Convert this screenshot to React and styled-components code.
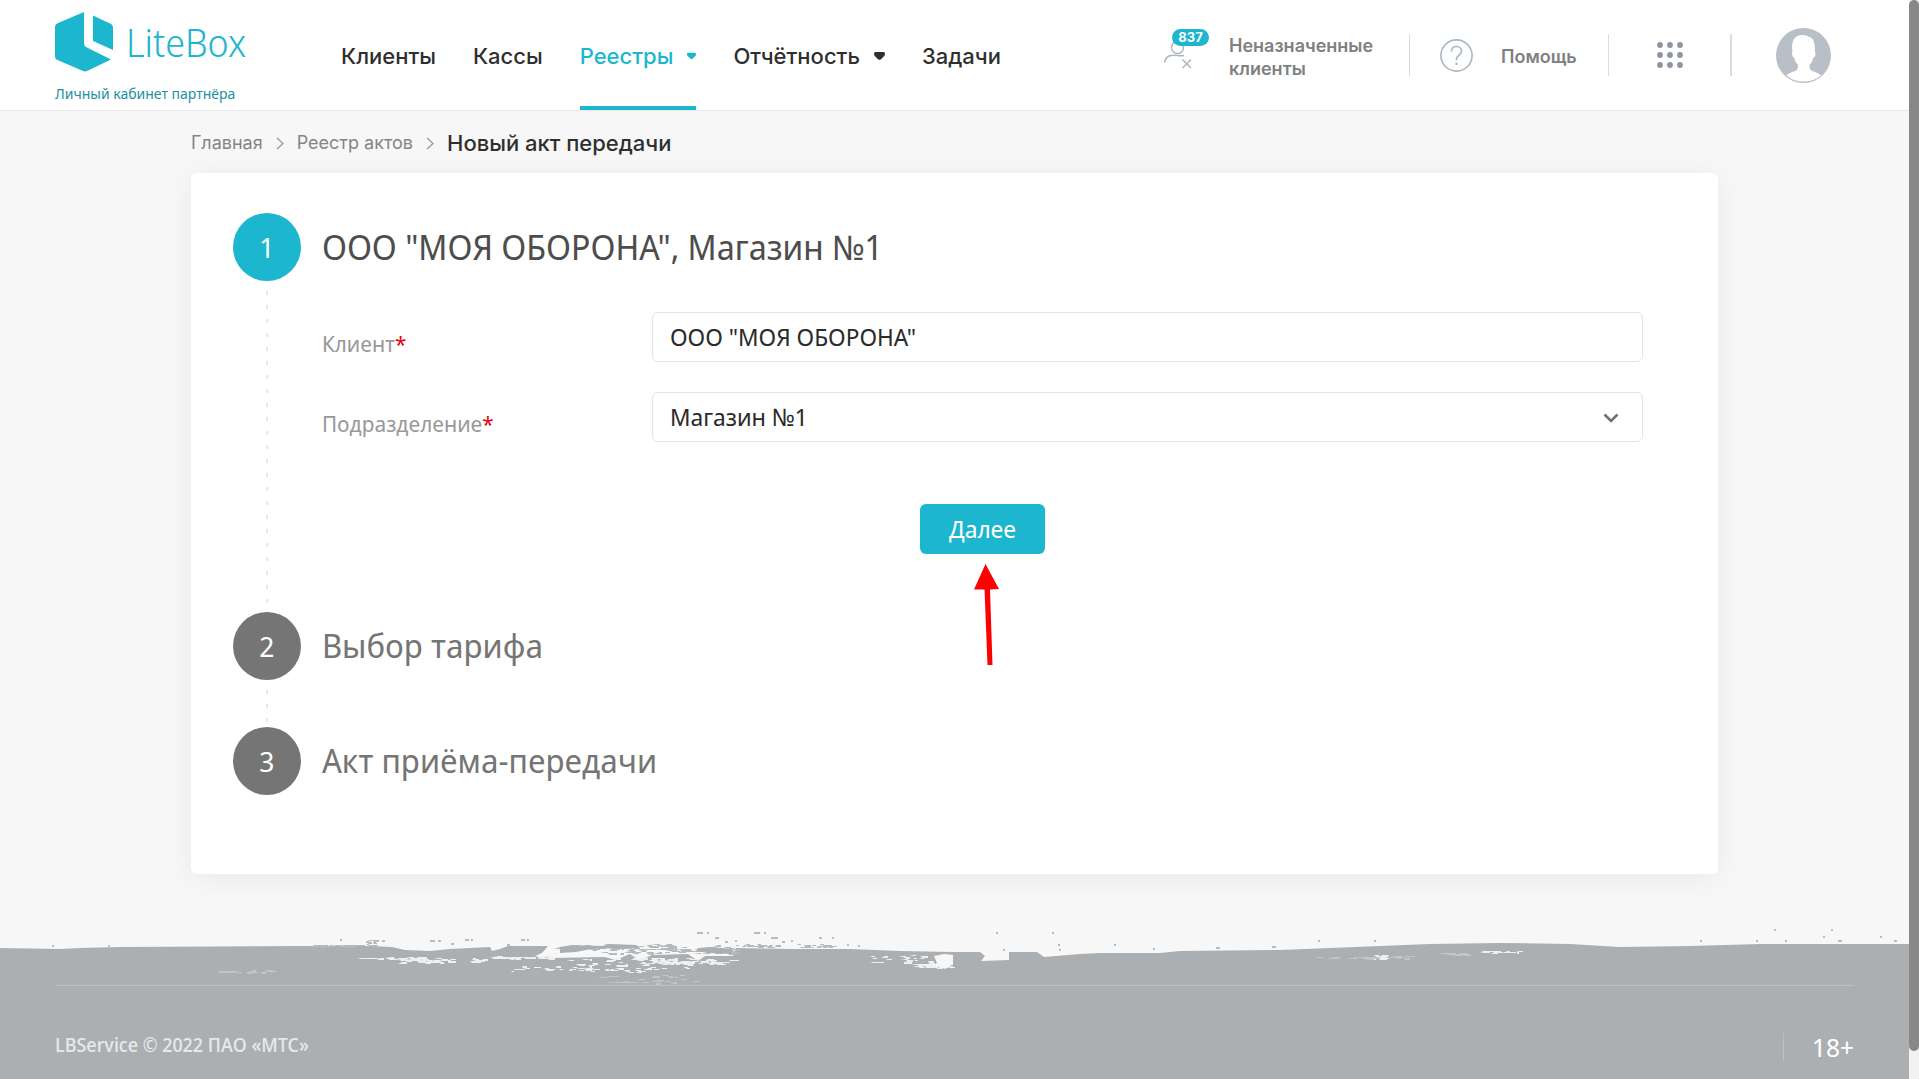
import React, { useState } from 'react';
import styled, { createGlobalStyle } from 'styled-components';

const GlobalStyle = createGlobalStyle`
  * {
    box-sizing: border-box;
  }

  body {
    margin: 0;
    background: #f7f7f7;
    color: #333;
    font-family: 'Noto Sans Display', 'Noto Sans', sans-serif;
  }

  a {
    color: inherit;
    text-decoration: none;
  }
`;

const Shell = styled.div`
  display: flex;
  min-height: 100vh;
`;

const Page = styled.div`
  flex: 1;
  min-width: 0;
  display: flex;
  flex-direction: column;
`;

const Scrollbar = styled.div`
  position: sticky;
  top: 0;
  width: 10px;
  height: 100vh;
  background: #f1f1f1;
`;

const Thumb = styled.div`
  height: calc(100% - 28px);
  border-radius: 5px;
  background: #888;
`;

const Header = styled.header`
  display: flex;
  justify-content: space-between;
  height: 111px;
  padding: 0 78px 0 55px;
  background: #fff;
  border-bottom: 1px solid #e8e8e8;
  font-family: Inter, sans-serif;
`;

const Side = styled.div`
  display: flex;
`;

const Brand = styled.a`
  display: flex;
  flex-direction: column;
  width: 286px;
  padding-top: 12px;
  color: #1b91a3;
  font: 14px/20px 'Noto Sans', sans-serif;
`;

const BrandTop = styled.span`
  display: flex;
  gap: 12px;
  height: 72px;
  color: #1cb6ce;
  font: 300 38px/60px 'Noto Sans Display', 'Noto Sans', sans-serif;
`;

const Nav = styled.nav`
  display: flex;
  gap: 37px;
`;

const NavLink = styled.a`
  display: flex;
  align-items: center;
  gap: 14px;
  height: 110px;
  padding-top: 6px;
  border-bottom: 4px solid ${({ $active }) => ($active ? '#1cb6ce' : 'transparent')};
  color: ${({ $active }) => ($active ? '#1cb6ce' : '#2f2f2f')};
  font-size: 22px;
  font-weight: 500;
`;

const Tools = styled.div`
  display: flex;
  align-items: center;
`;

const ToolLink = styled.a`
  display: flex;
  align-items: center;
  gap: ${({ $gap }) => $gap}px;
  color: #808080;
  font-size: 18px;
  font-weight: 600;
  line-height: 23px;
`;

const ToolText = styled.span`
  min-width: ${({ $min = 0 }) => $min}px;
  padding-top: 3px;
`;

const IconBox = styled.span`
  position: relative;
  display: flex;
  width: 45px;
`;

const Badge = styled.span`
  position: absolute;
  top: -9px;
  left: 8px;
  width: 37px;
  border-radius: 9px;
  background: #1cb6ce;
  color: #fff;
  font-size: 13px;
  font-weight: 700;
  line-height: 17px;
  text-align: center;
`;

const Divider = styled.span`
  width: ${({ $w = 1 }) => $w}px;
  height: 42px;
  margin: 0 ${({ $right }) => $right}px 0 ${({ $left }) => $left}px;
  background: #dcdcdc;
`;

const IconButton = styled.button`
  display: flex;
  padding: 0;
  border: none;
  background: none;
  cursor: pointer;
`;

const Main = styled.main`
  padding: 0 10%;
`;

const Crumbs = styled.nav`
  display: flex;
  align-items: center;
  gap: 13px;
  height: 62px;
  padding-top: 2px;
  color: #858585;
  font: 18px/24px Inter, sans-serif;
`;

const Current = styled.span`
  color: #2f2f2f;
  font-size: 22px;
  font-weight: 500;
`;

const Card = styled.section`
  padding: 40px 75px 79px 42px;
  border-radius: 6px;
  background: #fff;
  box-shadow: 0 4px 30px rgba(0, 0, 0, 0.06);
`;

const StepRow = styled.div`
  display: flex;
  gap: 21px;
`;

const Rail = styled.div`
  display: flex;
  flex-direction: column;
  align-items: center;
  gap: 10px;
`;

const Circle = styled.span`
  width: 68px;
  height: 68px;
  border-radius: 50%;
  background: ${({ $active }) => ($active ? '#1cb6ce' : '#757575')};
  color: #fff;
  font-size: 28px;
  line-height: 68px;
  text-align: center;
`;

const Dashes = styled.span`
  flex: 1;
  width: 2px;
  background: repeating-linear-gradient(#e8e8e8 0 4px, transparent 4px 14px);
`;

const StepBody = styled.div`
  flex: 1;
  padding-bottom: ${({ $bottom = 0 }) => $bottom}px;
`;

const StepTitle = styled.h2`
  margin: 0;
  color: ${({ $active }) => ($active ? '#4d4d4d' : '#757575')};
  font-size: ${({ $active }) => ($active ? 34 : 33)}px;
  font-weight: 400;
  line-height: 68px;
`;

const Form = styled.form`
  display: flex;
  flex-direction: column;
  gap: 30px;
  padding-top: 31px;
`;

const Field = styled.div`
  display: grid;
  grid-template-columns: 330px 1fr;
`;

const Label = styled.label`
  padding-top: 15px;
  color: #999;
  font-size: 22px;
  line-height: 32px;
`;

const Required = styled.span`
  color: #e30613;
`;

const Control = styled.input`
  width: 100%;
  height: 50px;
  padding: 0 17px 2px;
  border: 1px solid #e3e3e3;
  border-radius: 6px;
  background: #fff;
  color: #2b2b2b;
  font: 24px 'Noto Sans Display', 'Noto Sans', sans-serif;
  appearance: none;
`;

const SelectBox = styled.div`
  position: relative;

  svg {
    position: absolute;
    top: 21px;
    right: 24px;
    pointer-events: none;
  }
`;

const Submit = styled.div`
  position: relative;
  display: flex;
  justify-content: center;
  padding-top: 32px;
`;

const Button = styled.button`
  height: 50px;
  padding: 0 29px 2px;
  border: none;
  border-radius: 6px;
  background: #1cb6ce;
  color: #fff;
  font: 24px 'Noto Sans Display', 'Noto Sans', sans-serif;
  cursor: pointer;
`;

const Arrow = styled.svg`
  position: absolute;
  top: 92px;
  left: calc(50% - 9px);
`;

const Footer = styled.footer`
  margin-top: auto;
`;

const Brush = styled.svg`
  display: block;
  width: 100%;
  height: 67px;
`;

const FooterBody = styled.div`
  padding: 0 55px 17px;
  background: #abafb2;
`;

const FooterRow = styled.div`
  display: flex;
  justify-content: space-between;
  align-items: center;
  padding-top: 45px;
  border-top: 1px solid #bcc0c3;
  color: #e6e8e9;
  font-size: 19px;
  font-weight: 500;
  line-height: 28px;
`;

const Copyright = styled.span`
  padding-bottom: 3px;
`;

const Age = styled.span`
  padding-left: 28px;
  border-left: 1px solid #bcc0c3;
  color: #fff;
  font-size: 26px;
  font-weight: 400;
`;

// small repeatable generator, keeps the brush texture the same on every render
const scatter = (seed, count, x, y, w, h, maxW) => {
  let s = seed;
  const next = () => {
    s = (s * 16807) % 2147483647;
    return s / 2147483647;
  };
  return Array.from({ length: count }, () => {
    const px = Math.round(x + next() * w);
    const py = Math.round(y + next() * h);
    return `M${px} ${py}h${Math.round(2 + next() * maxW)}v${next() > 0.75 ? 2 : 1}h-${Math.round(2 + next() * maxW)}z`;
  }).join('');
};

const holes = [
  scatter(11, 20, 362, 39, 60, 2, 8),
  scatter(23, 38, 400, 40, 50, 4, 7),
  scatter(37, 14, 470, 40, 18, 4, 6),
  scatter(41, 26, 492, 38, 54, 2, 9),
  scatter(53, 30, 512, 48, 120, 5, 6),
  scatter(61, 60, 640, 40, 90, 6, 8),
  scatter(67, 50, 570, 40, 120, 14, 6),
  scatter(83, 18, 870, 37, 60, 8, 6),
  scatter(97, 46, 916, 45, 32, 4, 7),
  scatter(127, 14, 1480, 33, 40, 1, 8),
  scatter(113, 14, 1372, 37, 12, 4, 6),
].join('');

const faintHoles = [
  scatter(149, 22, 218, 52, 56, 3, 7),
  scatter(71, 24, 600, 56, 96, 9, 8),
  scatter(101, 20, 1318, 38, 90, 2, 9),
  scatter(131, 10, 1440, 35, 28, 1, 8),
].join('');

const specks = [
  scatter(151, 34, 312, 27, 60, 1, 8),
  scatter(163, 70, 560, 26, 176, 7, 8),
  scatter(173, 50, 600, 30, 134, 5, 8),
  scatter(181, 26, 742, 26, 38, 3, 3),
  scatter(191, 26, 798, 26, 38, 3, 3),
  scatter(193, 10, 366, 22, 12, 4, 2),
].join('');

const dots = [
  [52, 27, 2], [108, 27, 2], [340, 21, 2], [374, 22, 5], [382, 22, 3], [430, 22, 5], [438, 22, 3],
  [465, 21, 4], [471, 21, 2], [521, 21, 4], [527, 21, 2], [451, 25, 3], [507, 26, 3],
  [697, 14, 6], [707, 14, 2], [754, 14, 6], [764, 14, 2], [715, 19, 4], [725, 23, 3], [735, 22, 2],
  [771, 19, 7], [782, 23, 3], [791, 22, 2], [819, 19, 3], [832, 19, 2], [847, 26, 2], [858, 27, 2],
  [996, 14, 2], [1052, 14, 2], [1003, 31, 2], [1058, 26, 2], [1059, 31, 2], [1114, 26, 2],
  [1153, 30, 2], [1216, 29, 4], [1272, 28, 4], [1318, 22, 2], [1374, 22, 2], [1700, 22, 2],
  [1756, 22, 2], [1774, 11, 2], [1831, 11, 2], [1785, 22, 2], [1823, 18, 2], [1838, 22, 4], [1880, 18, 2], [1894, 22, 3],
];

const Caret = ({ width = 11 }) => (
  <svg width={width} height="8" viewBox="0 0 11 8" fill="currentColor">
    <path d="M1.500 0h8q1.500 0 1.500 1.500t-.8 2.500L7 7.200q-1.500 1.300-3 0L.8 4Q0 3 0 1.500T1.500 0z" />
  </svg>
);

const Chevron = () => (
  <svg width="8" height="13" viewBox="0 0 8 13" fill="none" stroke="#999" strokeWidth="1.300">
    <path d="M1 1l6 5.500L1 12" />
  </svg>
);

const App = () => {
  const [client, setClient] = useState('ООО "МОЯ ОБОРОНА"');
  const [unit, setUnit] = useState('Магазин №1');

  return (
    <Shell>
      <GlobalStyle />
      <Page>
        <Header>
          <Side>
            <Brand href="#">
              <BrandTop>
                <svg width="59" height="60" viewBox="0 0 59 60" fill="#1cb6ce">
                  <path d="M29 0v31q0 3 3 4.500L56 47.500 32.500 58.800q-2.500 1.200-5 0L2.500 48Q0 47 0 44.500V15q0-2.500 2.500-3.700z" />
                  <path d="M38 3.500l16.500 7.700q3.500 1.600 3.500 4.300V38L38 29z" />
                </svg>
                LiteBox
              </BrandTop>
              Личный кабинет партнёра
            </Brand>
            <Nav>
              <NavLink href="#">Клиенты</NavLink>
              <NavLink href="#">Кассы</NavLink>
              <NavLink href="#" $active>Реестры <Caret width={9} /></NavLink>
              <NavLink href="#">Отчётность <Caret /></NavLink>
              <NavLink href="#">Задачи</NavLink>
            </Nav>
          </Side>
          <Tools>
            <ToolLink href="#" $gap={20}>
              <IconBox>
                <svg width="28" height="34" viewBox="0 0 28 34" fill="none" stroke="#aab6c3" strokeWidth="1.500">
                  <circle cx="13.500" cy="9.500" r="6" />
                  <path d="M.8 24.500v-1.500Q2.500 18 7 17.500q3.500-.5 6.500 0t6.500 0" />
                  <path d="M18.500 21.500l8.500 8.500M27 21.500L18.500 30" />
                </svg>
                <Badge>837</Badge>
              </IconBox>
              <ToolText $min={150}>Неназначенные<br />клиенты</ToolText>
            </ToolLink>
            <Divider $left={30} $right={30} />
            <ToolLink href="#" $gap={28}>
              <svg width="33" height="33" viewBox="0 0 33 33" fill="none" stroke="#aab6c3" strokeWidth="1.600">
                <circle cx="16.500" cy="16.500" r="15.600" />
                <path d="M11.500 12.500c0-3 2-5 5-5s5 2 5 4.700c0 4-5 4-5 8v1" />
                <path d="M16.500 23.500v2.500" strokeWidth="2" />
              </svg>
              <ToolText $min={77}>Помощь</ToolText>
            </ToolLink>
            <Divider $left={30} $right={48} />
            <IconButton aria-label="Сервисы">
              <svg width="26" height="26" viewBox="0 0 26 26" fill="#8c95a1">
                {[3, 13, 23].map((y) => [3, 13, 23].map((x) => <circle key={`${x}-${y}`} cx={x} cy={y} r="2.900" />))}
              </svg>
            </IconButton>
            <Divider $w={2} $left={47} $right={44} />
            <IconButton aria-label="Профиль">
              <svg width="55" height="55" viewBox="0 0 55 55">
                <circle cx="27.500" cy="27.500" r="27.500" fill="#b9bfc7" />
                <path
                  d="M10.500 47.500q3-3 9-4.500 3-2 2.500-6-3-3-4-7.500-2-.500-2-4.500l.5-1Q14 7 27 7q4 0 6 2 6 0 6 15l.5 1q0 4-2 4.500-1 4.500-4 7.500-.500 4 2.500 6 6 1.500 9 4.500-7 6-17.500 6t-17-6z"
                  fill="#fff"
                />
              </svg>
            </IconButton>
          </Tools>
        </Header>

        <Main>
          <Crumbs>
            <a href="#">Главная</a>
            <Chevron />
            <a href="#">Реестр актов</a>
            <Chevron />
            <Current>Новый акт передачи</Current>
          </Crumbs>

          <Card>
            <StepRow>
              <Rail>
                <Circle $active>1</Circle>
                <Dashes />
              </Rail>
              <StepBody $bottom={58}>
                <StepTitle $active>{client}, {unit}</StepTitle>
                <Form onSubmit={(e) => e.preventDefault()}>
                  <Field>
                    <Label htmlFor="client">Клиент<Required>*</Required></Label>
                    <Control id="client" value={client} onChange={(e) => setClient(e.target.value)} />
                  </Field>
                  <Field>
                    <Label htmlFor="unit">Подразделение<Required>*</Required></Label>
                    <SelectBox>
                      <Control as="select" id="unit" value={unit} onChange={(e) => setUnit(e.target.value)}>
                        <option>Магазин №1</option>
                      </Control>
                      <svg width="16" height="10" viewBox="0 0 16 10" fill="none" stroke="#707070" strokeWidth="2.600">
                        <path d="M1.500 1.500L8 8l6.500-6.500" />
                      </svg>
                    </SelectBox>
                  </Field>
                  <Submit>
                    <Button type="submit">Далее</Button>
                    <Arrow width="26" height="102" viewBox="0 0 26 102" fill="#f00">
                      <path d="M11.500 0L25 25l-9 .500L18.500 101h-5L10.500 25.500H0z" />
                    </Arrow>
                  </Submit>
                </Form>
              </StepBody>
            </StepRow>
            <StepRow>
              <Rail>
                <Circle>2</Circle>
                <Dashes />
              </Rail>
              <StepBody $bottom={47}>
                <StepTitle>Выбор тарифа</StepTitle>
              </StepBody>
            </StepRow>
            <StepRow>
              <Rail>
                <Circle>3</Circle>
              </Rail>
              <StepBody>
                <StepTitle>Акт приёма-передачи</StepTitle>
              </StepBody>
            </StepRow>
          </Card>
        </Main>

        <Footer>
          <Brush viewBox="0 0 1909 67" preserveAspectRatio="none">
            <path
              fill="#abafb2"
              d="M0 30L60 31 80 30 120 29 300 28 370 28 392 29 405 32 430 33 450 31 490 29 492 33 500 31 508 28 548 28 542 35 535 38 550 40 605 39 615 42 630 36 640 43 652 37 688 36 698 43 705 38 733 38 736 30 790 31 850 31 900 33 953 34 980 34 985 38 981 43 1009 42 1009 34 1037 34 1044 39 1080 36 1100 35 1160 35 1180 33 1280 32 1330 30 1380 28 1430 26 1500 25 1570 26 1620 29 1690 28 1760 26 1909 26V67H0z"
            />
            <path fill="#b5b9bb" d={specks} />
            <path fill="#abafb2" d="M560 29l12-2 30 1 8-2 26 1 4 3-14 1-30-1-20 4-16 1z" />
            <path fill="#abafb2" d="M698 30l14-1 20 2v5l-24-1-12-2z" />
            <path fill="#eef0f0" d={holes} />
            <path fill="#c3c6c8" d={faintHoles} />
            <path fill="#f7f7f7" d="M934 38l10-2 9 1v9l-8 5-6-3-8 1 6-4z" />
            {dots.map(([x, y, w]) => (
              <rect key={`${x}-${y}`} x={x} y={y} width={w} height="2" fill="#b9bcbe" />
            ))}
          </Brush>
          <FooterBody>
            <FooterRow>
              <Copyright>LBService © 2022 ПАО «МТС»</Copyright>
              <Age>18+</Age>
            </FooterRow>
          </FooterBody>
        </Footer>
      </Page>
      <Scrollbar>
        <Thumb />
      </Scrollbar>
    </Shell>
  );
};

export default App;
